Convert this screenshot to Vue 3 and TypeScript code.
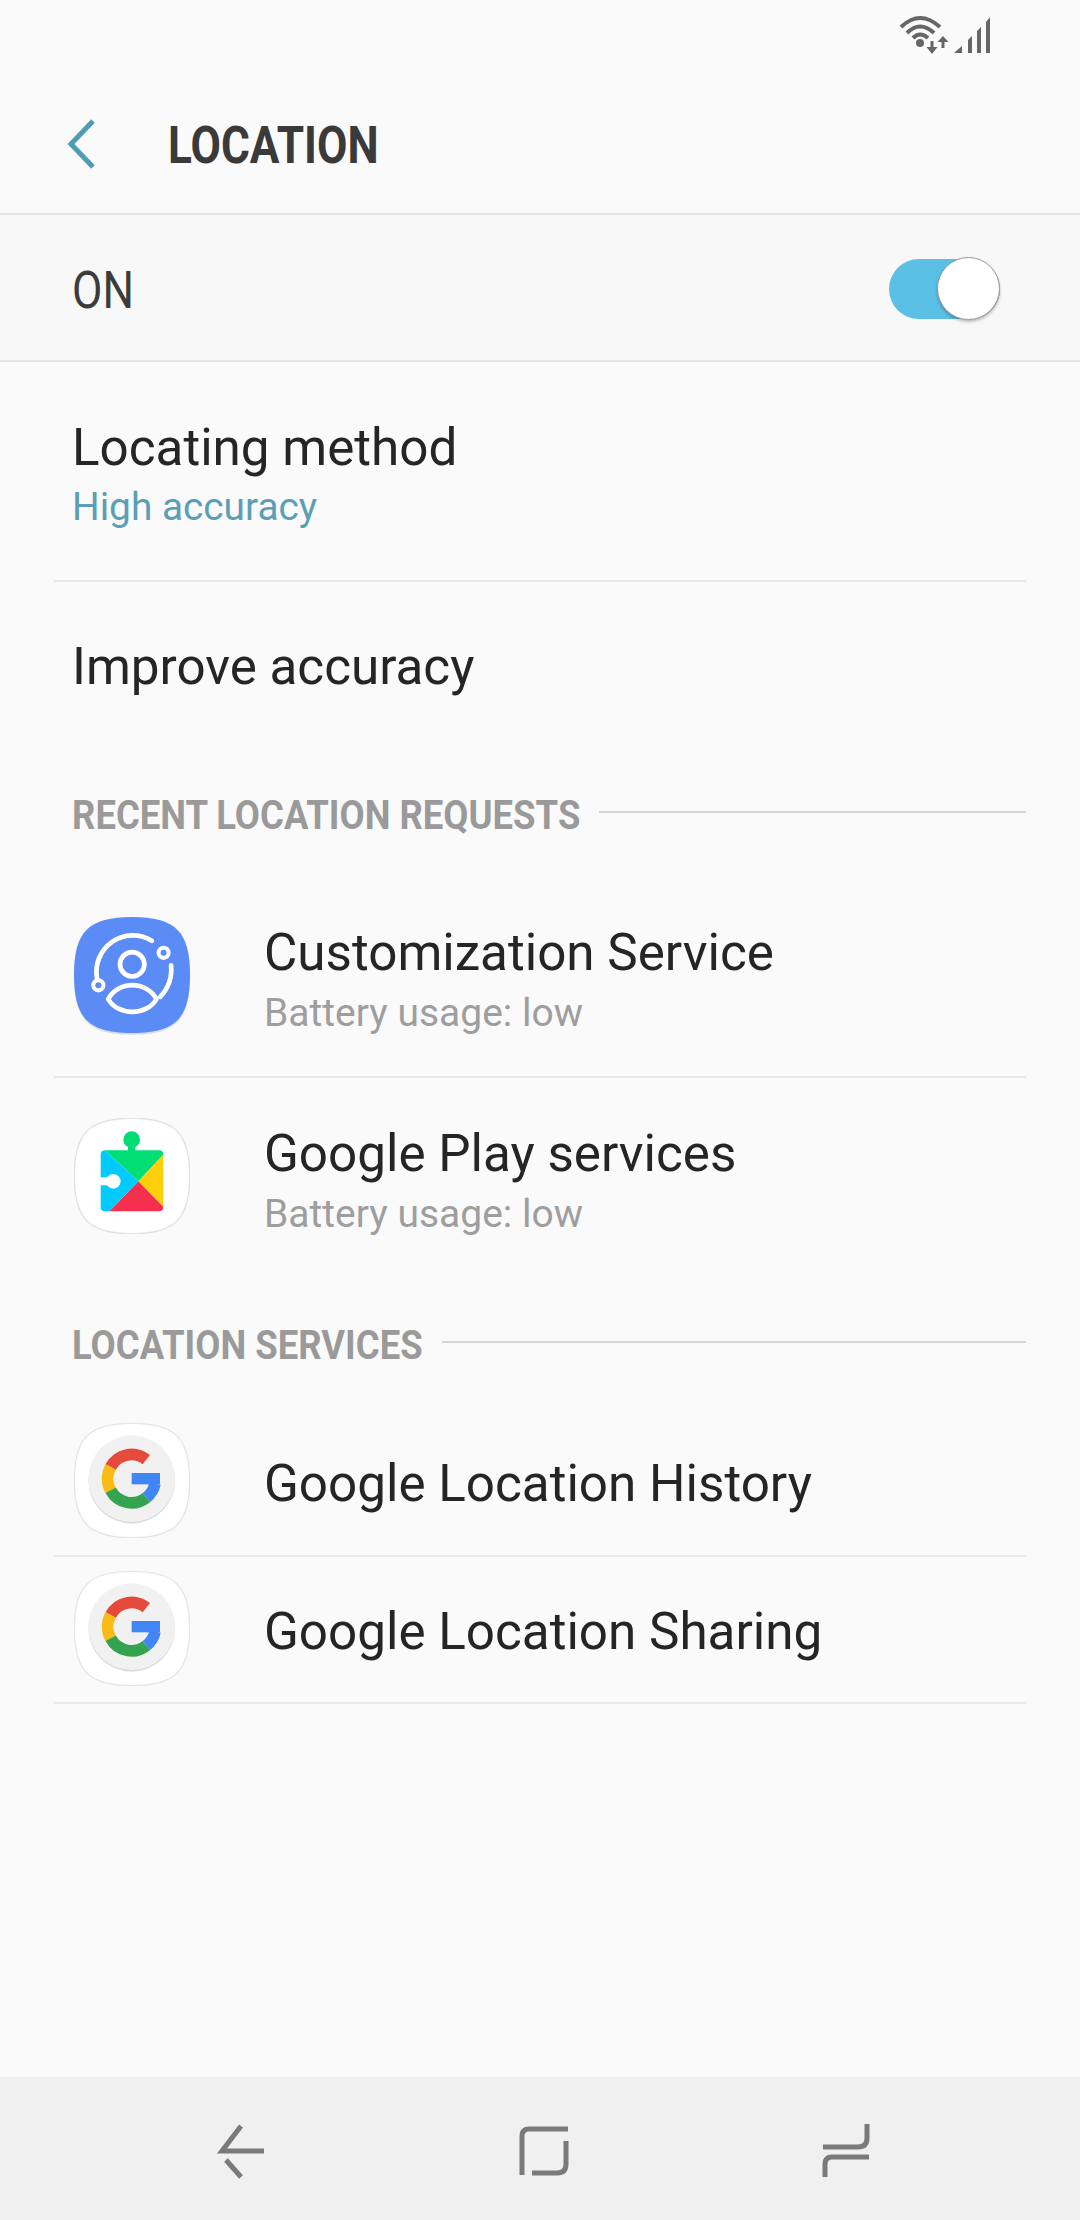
<template>
  <div class="page">
    <div class="status-bar">
      <svg class="status-icons" width="100" height="46" viewBox="895 12 100 46">
        <g fill="none" stroke="#666" stroke-width="4">
          <path d="M900 27Q919 9 939 27" />
          <path d="M906 33Q919 20 933 33" />
          <path d="M912 38Q919 31 927 38" />
        </g>
        <circle cx="919" cy="43" r="4" fill="#666" />
        <path d="M929.5 41h3v6h4l-5.500 7-5.500-7h4z" fill="#666" />
        <path d="M940.500 48h3v-6h4l-5.500-6-5.500 6h4z" fill="#666" />
        <path d="M953 53l8-7v7zM967 53V40l4-4v17zM976 53V31l4-4v26zM985 53V22l4-5v36z" fill="#666" />
      </svg>
    </div>

    <header class="app-bar">
      <svg class="back" width="32" height="50" viewBox="0 0 32 50">
        <path d="M27 2L5 25l22 23" fill="none" stroke="#4f9db5" stroke-width="5" />
      </svg>
      <h1 class="title">LOCATION</h1>
    </header>

    <div class="switch-row">
      <span class="switch-label">ON</span>
      <div class="switch"><div class="knob"></div></div>
    </div>

    <div class="list-row locating">
      <div class="row-title">Locating method</div>
      <div class="row-sub accent">High accuracy</div>
    </div>
    <div class="list-row improve no-line">
      <div class="row-title">Improve accuracy</div>
    </div>

    <div class="section first">
      <span class="section-label">RECENT LOCATION REQUESTS</span>
      <span class="section-line"></span>
    </div>

    <div
      v-for="app in recentApps"
      :key="app.name"
      class="app-row"
      :class="app.cls"
    >
      <div class="app-icon">
        <svg v-if="app.icon === 'custom'" width="116" height="118" viewBox="75 52 343 349">
          <path d="M247 58C375 58 418 100 418 228C418 357 375 400 247 400C118 400 75 357 75 228C75 100 118 58 247 58Z" fill="#d6dcec" />
          <path d="M247 52C375 52 418 95 418 223C418 352 375 395 247 395C118 395 75 352 75 223C75 95 118 52 247 52Z" fill="#5b8bf4" />
          <g fill="none" stroke="#fff" stroke-width="14">
            <circle cx="247" cy="192" r="36" />
            <path d="M176 295C205 240 290 240 319 295C290 345 205 345 176 295Z" stroke-linejoin="round" />
            <path d="M143 234A108 108 0 0 1 305 122" stroke-linecap="round" />
            <path d="M362 195A118 118 0 0 1 330 288" stroke-linecap="round" />
            <circle cx="147" cy="254" r="15" stroke-width="12" />
            <circle cx="340" cy="158" r="15" stroke-width="12" />
          </g>
        </svg>
        <svg v-else width="116" height="116" viewBox="72 655 348 348">
          <path d="M246 656C375 656 419 700 419 829C419 958 375 1002 246 1002C117 1002 73 958 73 829C73 700 117 656 246 656Z" fill="#fff" stroke="#e2e2e2" stroke-width="4" />
          <circle cx="245" cy="720" r="25" fill="#00dd72" />
          <rect x="234" y="735" width="22" height="25" fill="#00dd72" />
          <path d="M165 752H327Q340 752 340 765L265 845Z" fill="#00de74" />
          <path d="M340 765V922L265 845Z" fill="#ffcf0a" />
          <path d="M340 922Q340 935 327 935H178L265 845Z" fill="#f5304f" />
          <path d="M165 752L265 845L178 935H165Q152 935 152 922V765Q152 752 165 752Z" fill="#00cbfc" />
          <circle cx="190" cy="845" r="22" fill="#fff" />
          <rect x="150" y="833" width="40" height="24" fill="#fff" />
        </svg>
      </div>
      <div class="app-text">
        <div class="row-title">{{ app.name }}</div>
        <div class="row-sub">{{ app.sub }}</div>
      </div>
    </div>

    <div class="section second">
      <span class="section-label">LOCATION SERVICES</span>
      <span class="section-line"></span>
    </div>

    <div
      v-for="name in services"
      :key="name"
      class="app-row service"
    >
      <div class="app-icon">
        <svg width="116" height="116" viewBox="72 65 348 348">
          <path d="M246 69C375 69 419 113 419 240C419 368 375 412 246 412C117 412 73 368 73 240C73 113 117 69 246 69Z" fill="#fff" stroke="#e6e6e6" stroke-width="4" />
          <circle cx="245" cy="240" r="130" fill="#dcdcdc" />
          <circle cx="245" cy="235" r="130" fill="#f1f1f1" />
          <g fill="none" stroke-width="35">
            <path d="M289 178A71 71 0 0 0 182 200" stroke="#e64a3b" />
            <path d="M182 200A71 71 0 0 0 182 270" stroke="#f9bc15" />
            <path d="M182 270A71 71 0 0 0 289 292" stroke="#34a451" />
            <path d="M289 292A71 71 0 0 0 315 250" stroke="#4285f4" />
          </g>
          <rect x="245" y="218" width="85" height="34" fill="#4285f4" />
        </svg>
      </div>
      <div class="app-text">
        <div class="row-title">{{ name }}</div>
      </div>
    </div>

    <div class="spacer"></div>

    <nav class="nav-bar">
      <svg width="56" height="60" viewBox="213 2122 56 60">
        <g fill="none" stroke="#7a7a7a" stroke-width="5">
          <path d="M241 2126L222 2151H264" />
          <path d="M226 2160L241 2177" />
        </g>
      </svg>
      <svg width="56" height="60" viewBox="515 2122 56 60">
        <g fill="none" stroke="#7a7a7a" stroke-width="5">
          <path d="M521 2175V2136Q521 2129 528 2129H567" />
          <path d="M565 2141V2164Q565 2173 556 2173H531" />
        </g>
      </svg>
      <svg width="56" height="60" viewBox="818 2122 56 60">
        <g fill="none" stroke="#7a7a7a" stroke-width="5">
          <path d="M867 2124V2138Q867 2147 858 2147H823" />
          <path d="M825 2177V2164Q825 2157 832 2157H869" />
        </g>
      </svg>
    </nav>
  </div>
</template>

<script setup lang="ts">
interface RecentApp {
  name: string;
  sub: string;
  icon: "custom" | "play";
  cls: string;
}

const recentApps: RecentApp[] = [
  { name: "Customization Service", sub: "Battery usage: low", icon: "custom", cls: "with-line" },
  { name: "Google Play services", sub: "Battery usage: low", icon: "play", cls: "last" },
];

const services = ["Google Location History", "Google Location Sharing"];
</script>

<style>
html,
body {
  margin: 0;
  background: #fafafa;
}
</style>

<style scoped>
.page {
  display: flex;
  flex-direction: column;
  width: 1080px;
  height: 2220px;
  background: #fafafa;
  font-family: Roboto, "Liberation Sans", sans-serif;
  color: #252525;
  overflow: hidden;
}
.status-bar {
  display: flex;
  justify-content: flex-end;
  height: 60px;
  padding: 12px 84px 0 0;
  box-sizing: border-box;
}
.app-bar {
  display: flex;
  align-items: center;
  height: 155px;
  box-sizing: border-box;
  padding: 18px 0 0 66px;
  border-bottom: 2px solid #e4e4e4;
}
.back {
  margin-top: -3px;
}
.title {
  margin: 0 0 0 70px;
  font-size: 51px;
  font-weight: 700;
  color: #3a3a3a;
  display: inline-block;
  transform: scaleX(0.865);
  transform-origin: left center;
}
.switch-row {
  display: flex;
  align-items: center;
  justify-content: space-between;
  height: 147px;
  box-sizing: border-box;
  padding: 3px 80px 0 72px;
  background: #f8f8f8;
  border-bottom: 2px solid #e4e4e4;
}
.switch-label {
  margin-top: 2px;
  font-size: 52px;
  color: #3c3c3c;
  display: inline-block;
  transform: scaleX(0.85);
  transform-origin: left center;
}
.switch {
  position: relative;
  width: 111px;
  height: 60px;
  border-radius: 30px;
  background: #5bc0e6;
}
.knob {
  position: absolute;
  right: 0;
  top: -2px;
  width: 61px;
  height: 61px;
  border-radius: 50%;
  background: #fff;
  border: 1px solid #9a9a9a;
  box-shadow: 0 2px 3px rgba(0, 0, 0, 0.25);
}
.list-row {
  display: flex;
  flex-direction: column;
  justify-content: center;
  margin: 0 54px;
  padding: 0 18px;
  border-bottom: 2px solid #e9e9e9;
}
.locating {
  height: 220px;
  box-sizing: border-box;
  padding-top: 8px;
}
.improve {
  height: 168px;
  box-sizing: border-box;
  padding-top: 2px;
}
.no-line {
  border-bottom: 0;
}
.row-title {
  font-size: 51.2px;
  line-height: 60px;
  color: #252525;
}
.row-sub {
  font-size: 38.8px;
  line-height: 50px;
  margin-top: 4px;
  color: #9e9e9e;
}
.app-text .row-sub {
  margin-top: 5px;
  font-size: 39px;
}
.accent {
  color: #5a9fb5;
}
.section {
  display: flex;
  align-items: center;
  margin: 0 54px 0 72px;
}
.section.first {
  height: 124px;
}
.section.second {
  height: 136px;
}
.section-label {
  flex: none;
  display: inline-block;
  margin-top: 5px;
  font-size: 41px;
  font-weight: 700;
  color: #9a9a9a;
  transform: scaleX(0.89);
  transform-origin: left center;
}
/* label is squeezed with a transform, so pull the rule back over the spare width */
.section.first .section-label {
  margin-right: -62px;
}
.section.second .section-label {
  margin-right: -42px;
}
.section-line {
  flex: 1;
  height: 2px;
  margin-left: 18px;
  background: #d6d6d6;
}
.app-row {
  display: flex;
  align-items: center;
  margin: 0 54px;
  padding-left: 20px;
  box-sizing: border-box;
}
.with-line {
  height: 204px;
  border-bottom: 2px solid #e9e9e9;
}
.last {
  height: 196px;
}
.service {
  height: 147px;
  border-bottom: 2px solid #e9e9e9;
}
.app-icon {
  display: flex;
  flex: none;
  width: 116px;
  height: 116px;
}
.service .app-icon {
  margin-top: -5px;
}
.service + .service .app-icon {
  margin-top: -3px;
}
.app-text {
  margin-left: 74px;
  padding-top: 10px;
}
.service .app-text {
  padding-top: 3px;
}
.service + .service .app-text {
  padding-top: 5px;
}
.spacer {
  flex: 1;
}
.nav-bar {
  display: flex;
  justify-content: space-between;
  align-items: center;
  height: 143px;
  box-sizing: border-box;
  padding: 7px 206px 0 213px;
  background: #f0f0f0;
}
</style>
